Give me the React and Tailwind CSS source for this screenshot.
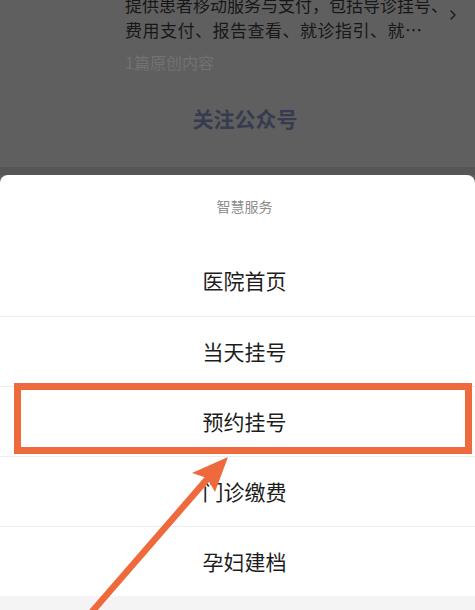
import { ChevronRight } from 'lucide-react'

const items = ['医院首页', '当天挂号', '预约挂号', '门诊缴费', '孕妇建档']

const App = () => {
  return (
    <div className="relative w-[475px] h-[610px] overflow-hidden bg-[#5f5f5f] flex flex-col font-['Noto_Sans_CJK_SC','Noto_Sans',sans-serif]">
      {/* dimmed account page behind the sheet */}
      <div className="h-[167px] flex flex-col">
        <div className="flex items-center pl-[125px] pr-[14px] -mt-[8px]">
          <div className="flex-1 min-w-0 text-[17px] leading-[25px] text-[#171717] whitespace-nowrap overflow-hidden">
            <p>提供患者移动服务与支付，包括导诊挂号、</p>
            <p className="tracking-[0.5px]">费用支付、报告查看、就诊指引、就…</p>
          </div>
          <ChevronRight className="shrink-0 w-[16px] h-[16px] text-[#1e1e1e] -mt-[4px]" strokeWidth={2.2} />
        </div>
        <p className="pl-[125px] mt-[8px] text-[16px] leading-[24px] text-[#727272]">1篇原创内容</p>
        <p className="mt-[29px] pl-[15px] text-center text-[21px] leading-[30px] font-bold text-[#363b50]">
          关注公众号
        </p>
      </div>
      <div className="h-[8px] bg-[#565656]" />

      {/* action sheet */}
      <div className="flex-1 flex flex-col bg-white rounded-t-[8px]">
        <div className="h-[71px] pt-[20px] pl-[14px] text-center text-[14px] leading-[22px] text-[#8c8c8c]">
          智慧服务
        </div>
        {items.map((item, i) => (
          <div
            key={item}
            className={`h-[70px] flex items-center justify-center pl-[14px] text-[21px] text-[#1d1d1d] ${
              i > 0 ? 'border-t border-[#ededed]' : ''
            }`}
          >
            {item}
          </div>
        ))}
        <div className="flex-1 bg-[#f4f4f4]" />
      </div>

      {/* annotation: highlight box */}
      <div className="absolute left-[14px] top-[383px] w-[458px] h-[71px] border-[7px] border-[#ee6a3c] pointer-events-none" />

      {/* annotation: arrow */}
      <svg
        className="absolute inset-0 pointer-events-none"
        width="475"
        height="610"
        viewBox="0 0 475 610"
      >
        <line x1="90" y1="614" x2="209" y2="477" stroke="#ee6a3c" strokeWidth="6.5" />
        <polygon points="228,457 192,473 207,478 215,492" fill="#ee6a3c" />
      </svg>
    </div>
  )
}

export default App
